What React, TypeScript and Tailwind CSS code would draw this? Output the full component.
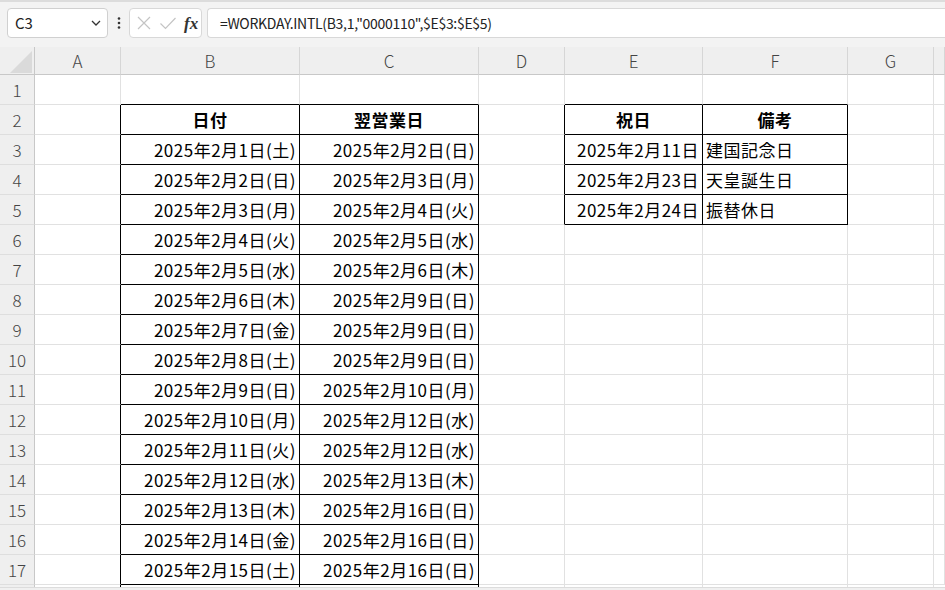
import React from "react";

const FONT = { fontFamily: '"Noto Sans CJK JP", "Noto Sans", sans-serif' };

const bDates = [
  "2025年2月1日(土)", "2025年2月2日(日)", "2025年2月3日(月)", "2025年2月4日(火)", "2025年2月5日(水)",
  "2025年2月6日(木)", "2025年2月7日(金)", "2025年2月8日(土)", "2025年2月9日(日)", "2025年2月10日(月)",
  "2025年2月11日(火)", "2025年2月12日(水)", "2025年2月13日(木)", "2025年2月14日(金)", "2025年2月15日(土)",
];
const cDates = [
  "2025年2月2日(日)", "2025年2月3日(月)", "2025年2月4日(火)", "2025年2月5日(水)", "2025年2月6日(木)",
  "2025年2月9日(日)", "2025年2月9日(日)", "2025年2月9日(日)", "2025年2月10日(月)", "2025年2月12日(水)",
  "2025年2月12日(水)", "2025年2月13日(木)", "2025年2月16日(日)", "2025年2月16日(日)", "2025年2月16日(日)",
];
const holidays = [
  ["2025年2月11日", "建国記念日"],
  ["2025年2月23日", "天皇誕生日"],
  ["2025年2月24日", "振替休日"],
];

const cols = ["A", "B", "C", "D", "E", "F", "G", ""];

type CellInfo = { text?: string; align?: "left" | "right" | "center"; bold?: boolean; r?: boolean; b?: boolean };

function getCell(row: number, col: number): CellInfo {
  const inB = row >= 2 && row <= 17;
  const inE = row >= 2 && row <= 5;
  const info: CellInfo = {};
  if (col === 0 && inB) info.r = true;
  if ((col === 1 || col === 2) && row === 1) info.b = true;
  if ((col === 1 || col === 2) && inB) { info.r = true; info.b = true; }
  if (col === 3 && inE) info.r = true;
  if ((col === 4 || col === 5) && row === 1) info.b = true;
  if ((col === 4 || col === 5) && inE) { info.r = true; info.b = true; }
  if (row === 2) {
    if (col === 1) { info.text = "日付"; info.align = "center"; info.bold = true; }
    if (col === 2) { info.text = "翌営業日"; info.align = "center"; info.bold = true; }
    if (col === 4) { info.text = "祝日"; info.align = "center"; info.bold = true; }
    if (col === 5) { info.text = "備考"; info.align = "center"; info.bold = true; }
  }
  if (row >= 3 && row <= 17) {
    if (col === 1) { info.text = bDates[row - 3]; info.align = "right"; }
    if (col === 2) { info.text = cDates[row - 3]; info.align = "right"; }
  }
  if (row >= 3 && row <= 5) {
    if (col === 4) { info.text = holidays[row - 3][0]; info.align = "right"; }
    if (col === 5) { info.text = holidays[row - 3][1]; info.align = "left"; }
  }
  return info;
}

function Cell({ row, col }: { row: number; col: number }) {
  const c = getCell(row, col);
  const rCls = c.r ? "border-r-black" : "border-r-[#e1e1e1]";
  const bCls = c.b ? "border-b-black" : "border-b-[#e1e1e1]";
  const alignCls =
    c.align === "right" ? "justify-end pr-[3px]" : c.align === "center" ? "justify-center" : "justify-start pl-[3px]";
  return (
    <div
      className={`flex items-center overflow-visible whitespace-nowrap border-r border-b ${rCls} ${bCls} ${alignCls} text-[17px] tracking-[0.5px] text-black ${c.bold ? "font-bold" : "font-normal"}`}
    >
      {c.text}
    </div>
  );
}

export default function App() {
  const rows = Array.from({ length: 17 }, (_, i) => i + 1);
  return (
    <div className="w-[945px] h-[590px] overflow-hidden bg-white flex flex-col" style={FONT}>
      {/* toolbar */}
      <div className="h-[47px] shrink-0 bg-[#f3f3f3] border-t-2 border-t-[#dcdcdc] flex items-start pt-[6px] pl-[7px]">
        <div className="w-[101px] h-[30px] bg-white border border-[#d0d0d0] rounded-[4px] flex items-center justify-between pl-[7px] pr-[4px]">
          <span className="text-[15px] text-[#222]">C3</span>
          <svg width="14" height="14" viewBox="0 0 14 14" fill="none" stroke="#333" strokeWidth="1.3">
            <path d="M3 5l4 4 4-4" />
          </svg>
        </div>
        <div className="w-[21px] h-[30px] flex items-center justify-center">
          <svg width="4" height="14" viewBox="0 0 4 14" fill="#333">
            <circle cx="2" cy="2.5" r="1.3" />
            <circle cx="2" cy="7" r="1.3" />
            <circle cx="2" cy="11.5" r="1.3" />
          </svg>
        </div>
        <div className="w-[73px] h-[30px] bg-white border border-[#d8d8d8] rounded-[4px] flex items-center pl-[6px] gap-[7px]">
          <svg width="16" height="16" viewBox="0 0 16 16" stroke="#c4c4c4" strokeWidth="1.2" fill="none">
            <path d="M2 2l12 12M14 2L2 14" />
          </svg>
          <svg width="18" height="16" viewBox="0 0 18 16" stroke="#c4c4c4" strokeWidth="1.2" fill="none">
            <path d="M1.5 8.5l5 5L16.5 3" />
          </svg>
          <span className="text-[17px] italic font-bold text-[#333] leading-none" style={{ fontFamily: '"Liberation Serif", serif' }}>
            fx
          </span>
        </div>
        <div className="ml-[5px] flex-1 h-[30px] bg-white border border-[#d8d8d8] rounded-l-[4px] border-r-0 flex items-center pl-[12px]">
          <span className="text-[14px] text-[#222] tracking-[-0.3px]">=WORKDAY.INTL(B3,1,"0000110",$E$3:$E$5)</span>
        </div>
      </div>

      {/* grid */}
      <div className="grid grid-cols-[35px_86px_179px_179px_86px_138px_145px_86px_1fr] grid-rows-[28px_repeat(17,30px)_2px]">
        <div className="bg-[#efefef] border-r border-b border-[#c8c8c8] relative">
          <svg className="absolute left-[10px] top-[4px]" width="22" height="22" viewBox="0 0 22 22">
            <path d="M22 0V22H0Z" fill="#dadada" />
          </svg>
        </div>
        {cols.map((c, i) => (
          <div
            key={"h" + i}
            className="bg-[#efefef] border-r border-r-[#d6d6d6] border-b border-b-[#c8c8c8] flex items-center justify-center text-[17px] text-[#444] font-light"
          >
            {c}
          </div>
        ))}
        {rows.map((r) => (
          <React.Fragment key={r}>
            <div className="bg-[#efefef] border-r border-r-[#c8c8c8] border-b border-b-[#dedede] flex items-center justify-center text-[17px] text-[#444] font-light">
              {r}
            </div>
            {cols.map((_, ci) => (
              <Cell key={ci} row={r} col={ci} />
            ))}
          </React.Fragment>
        ))}
        <div className="bg-[#efefef] border-r border-r-[#c8c8c8]" />
        <div className="border-r border-r-black" />
        <div className="border-r border-r-black" />
        <div className="border-r border-r-black" />
        <div className="border-r border-r-[#e1e1e1]" />
        <div className="border-r border-r-[#e1e1e1]" />
        <div className="border-r border-r-[#e1e1e1]" />
        <div className="border-r border-r-[#e1e1e1]" />
        <div />
      </div>
      <div className="flex-1 bg-[#f0f0f0] border-t border-[#dcdcdc]" />
    </div>
  );
}
